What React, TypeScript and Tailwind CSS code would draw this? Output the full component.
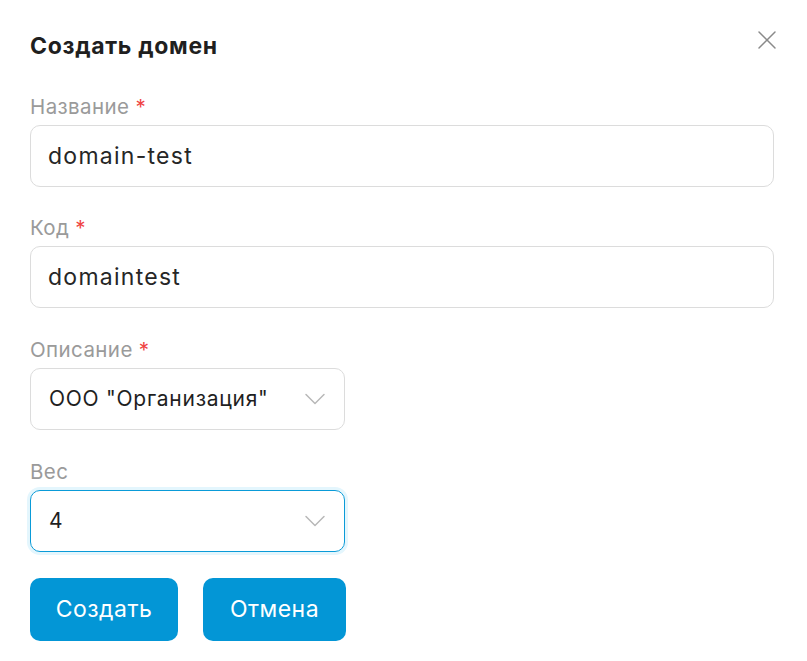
import { X, ChevronDown } from "lucide-react";

const font = { fontFamily: "Inter, 'Noto Sans', sans-serif" };

function Label({ text, required }: { text: string; required?: boolean }) {
  return (
    <div className="mb-[6px] h-6 text-[20.5px] leading-6 tracking-[0.02em] text-[#9a9a9a]">
      {text}
      {required && <span className="ml-[6px] text-[#ef4444]">*</span>}
    </div>
  );
}

function TextField({
  label,
  value,
  className,
}: {
  label: string;
  value: string;
  className: string;
}) {
  return (
    <div className={className}>
      <Label text={label} required />
      <div className="flex h-[62px] items-center rounded-[10px] border border-[#dcdcdc] px-[17px] text-[23px] tracking-[0.055em] text-[#262626]">
        {value}
      </div>
    </div>
  );
}

function SelectField({
  label,
  value,
  required,
  focused,
  className,
}: {
  label: string;
  value: string;
  required?: boolean;
  focused?: boolean;
  className: string;
}) {
  return (
    <div className={className}>
      <Label text={label} required={required} />
      <div
        className={
          focused
            ? "flex h-[62px] w-[315px] items-center justify-between rounded-[10px] border border-[#0a9bd8] pl-[18px] pr-[11px] text-[21px] tracking-[0.035em] text-[#1f1f1f] shadow-[0_0_0_3px_#e4f6fd]"
            : "flex h-[62px] w-[315px] items-center justify-between rounded-[10px] border border-[#dcdcdc] pl-[18px] pr-[11px] text-[21px] tracking-[0.035em] text-[#1f1f1f]"
        }
      >
        <span>{value}</span>
        <ChevronDown className="h-9 w-9 text-[#b8b8b8]" strokeWidth={1} />
      </div>
    </div>
  );
}

export default function App() {
  return (
    <div className="min-h-screen bg-white" style={font}>
      <div className="w-[807px] pl-[30px] pr-[33px] pt-[32px]">
        <div className="mb-[35px] flex items-center justify-between">
          <h2 className="text-[23px] font-bold leading-7 tracking-[0.03em] text-[#1f1f1f]">
            Создать домен
          </h2>
          <button type="button" className="-mr-[9px] -mt-[12px] text-[#8a8a8a]">
            <X className="h-8 w-8" strokeWidth={1.1} />
          </button>
        </div>
        <TextField className="mb-[29px]" label="Название" value="domain-test" />
        <TextField className="mb-[30px]" label="Код" value="domaintest" />
        <SelectField
          className="mb-[30px]"
          label="Описание"
          value={'ООО "Организация"'}
          required
        />
        <SelectField className="mb-[26px]" label="Вес" value="4" focused />
        <div className="flex gap-[25px]">
          <button
            type="button"
            className="h-[63px] w-[148px] rounded-[10px] bg-[#0396d6] text-[23px] tracking-[0.02em] text-white"
          >
            Создать
          </button>
          <button
            type="button"
            className="h-[63px] w-[143px] rounded-[10px] bg-[#0396d6] text-[23px] tracking-[0.02em] text-white"
          >
            Отмена
          </button>
        </div>
      </div>
    </div>
  );
}
